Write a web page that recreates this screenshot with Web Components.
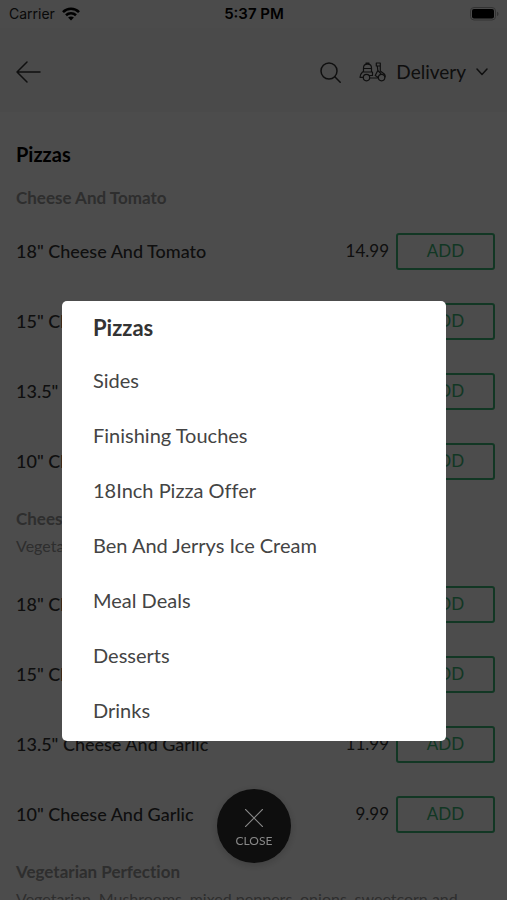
<!DOCTYPE html>
<html lang="en">
<head>
<meta charset="utf-8">
<meta name="viewport" content="width=device-width, initial-scale=1">
<title>Pizzas</title>
<style>
  body { margin: 0; background: #fff; font-family: Lato, "Open Sans", sans-serif; font-variant-ligatures: none; color: #333; }
</style>
</head>
<body>
<menu-screen></menu-screen>
<script>
const define = (name, html, setup) => customElements.define(name, class extends HTMLElement {
  constructor() {
    super();
    const t = document.createElement('template');
    t.innerHTML = html;
    this.attachShadow({ mode: 'open' }).append(t.content.cloneNode(true));
  }
  connectedCallback() { if (setup) setup(this, this.shadowRoot); }
});

define('status-bar', `
<style>
  :host { display: grid; grid-template-columns: 1fr auto 1fr; align-items: center; height: 28px; padding: 0 8px 0 9px; font: 14px/20px Inter, sans-serif; color: #000; background: #fafafa; }
  .left { display: flex; align-items: center; gap: 7px; color: #222; }
  .time { font-size: 15px; font-weight: 600; }
  .battery { justify-self: end; }
  svg { display: block; }
</style>
<span class="left">Carrier
  <svg width="18" height="14" viewBox="0 0 18 14" fill="none" stroke="#000" stroke-width="2.6"><path d="M1 5.1C5.4.6 12.6.6 17 5.1M4 8.2c2.800-2.700 7.200-2.700 10 0"/><path d="M9 13.600l-2.900-3c1.600-1.500 4.200-1.500 5.800 0z" fill="#000" stroke="none"/></svg>
</span>
<span class="time">5:37 PM</span>
<svg class="battery" width="29" height="14" viewBox="0 0 29 14"><rect x=".5" y=".5" width="25" height="12.500" rx="3.500" fill="none" stroke="#aaa"/><rect x="2" y="2" width="22" height="9.500" rx="2" fill="#000"/><path d="M27 4.700c2 .7 2 3.600 0 4.300z" fill="#aaa"/></svg>
`);

define('top-bar', `
<style>
  :host { display: flex; align-items: center; box-sizing: border-box; height: 84px; padding: 4px 19px 0 16px; color: #333; background: #f7f7f7; }
  button { all: unset; display: flex; align-items: center; cursor: pointer; }
  .back { margin-right: auto; }
  .search { margin-right: 18px; }
  .mode { gap: 10px; font-size: 19px; line-height: 24px; }
  svg { display: block; fill: none; stroke: #333; stroke-linecap: round; stroke-linejoin: round; }
</style>
<button class="back" aria-label="Back"><svg width="25" height="22" viewBox="0 0 25 22" stroke-width="1.500"><path d="M24 11H1M11 1L1 11l10 10"/></svg></button>
<button class="search" aria-label="Search"><svg width="21" height="21" viewBox="0 0 21 21" stroke-width="1.500"><circle cx="9" cy="9" r="8"/><path d="M14.800 14.800l5.400 5.400"/></svg></button>
<button class="mode">
  <svg width="27" height="20" viewBox="0 0 27 20" stroke-width="1.200"><path d="M4.500 10V6C4.500 3.600 6.200 2.200 8.500 2.200S12.500 3.600 12.500 6v4M7 2.300V1h3v1.300M4.500 6.500h8M3.500 10h10v3.500h-3M3.500 10C2 11.500 1 13 1 15.300h3.300M10.800 16h8.600M17.300 1h4v3h-4zM18.300 4l.5 4.500-2.600 5 3.200 2M21.300 4v5l4 3c.8.8 1 1.800.9 2.800M18.800 8.500l3 3"/><circle cx="7.500" cy="15.600" r="3.200"/><circle cx="22.600" cy="15.600" r="3.200"/></svg>
  <span>Delivery</span>
  <svg width="12" height="8" viewBox="0 0 12 8" stroke-width="1.500"><path d="M1 1l5 5.500L11 1"/></svg>
</button>
`);

define('menu-group', `
<style>
  :host { display: block; }
  header { padding: 12px 0 7px; color: #999; }
  h2 { margin: 0; font-size: 17px; line-height: 22px; font-weight: 700; }
  p { margin: 4px 0; font-size: 16px; line-height: 24px; white-space: nowrap; }
</style>
<header><h2></h2><p></p></header>
<slot></slot>
`, (el, root) => {
  root.querySelector('h2').textContent = el.getAttribute('name');
  const p = root.querySelector('p');
  if (el.hasAttribute('note')) p.textContent = el.getAttribute('note'); else p.remove();
});

define('menu-item', `
<style>
  :host { display: flex; align-items: center; height: 70px; font-size: 18px; line-height: 24px; color: #333; }
  .name { flex: 1; font-weight: 500; }
  .price { margin-right: 7px; font-size: 17px; }
  button { box-sizing: border-box; width: 99px; height: 37px; margin: 0; padding: 0; border: 2px solid #3cb878; border-radius: 3px; background: none; color: #3cb878; font: 17px/24px Lato, sans-serif; cursor: pointer; }
</style>
<span class="name"><slot></slot></span>
<span class="price"></span>
<button>ADD</button>
`, (el, root) => { root.querySelector('.price').textContent = el.getAttribute('price'); });

define('category-option', `
<style>
  :host { display: block; }
  button { all: unset; box-sizing: border-box; display: block; width: 100%; height: 55px; padding: 0 31px 7px; font-size: 20px; line-height: 48px; color: #444; cursor: pointer; }
  :host([current]) button { padding: 3px 31px 4px; font-size: 22px; font-weight: 700; color: #333; }
</style>
<button><slot></slot></button>
`);

define('close-button', `
<style>
  button { display: flex; flex-direction: column; align-items: center; justify-content: center; gap: 6px; box-sizing: border-box; width: 74px; height: 74px; margin: 0; padding: 5px 0 0; border: 0; border-radius: 50%; background: #0e0e0e; color: #888; font: 12px/16px Lato, sans-serif; box-shadow: 0 2px 10px rgba(0,0,0,.2); cursor: pointer; }
  svg { display: block; stroke: #888; stroke-width: 1.200; }
</style>
<button><svg width="18" height="18" viewBox="0 0 18 18"><path d="M0 0l18 18M18 0L0 18"/></svg><span>CLOSE</span></button>
`);

define('category-picker', `
<style>
  :host { position: fixed; inset: 0; display: flex; flex-direction: column; align-items: center; justify-content: flex-end; gap: 48px; padding: 0 61px 37px 62px; background: rgba(0,0,0,.7); }
  nav { align-self: stretch; border-radius: 5px; background: #fff; }
</style>
<nav aria-label="Menu categories"><slot></slot></nav>
<close-button></close-button>
`);

define('menu-screen', `
<style>
  :host { display: block; height: 100vh; overflow: hidden; }
  main { padding: 30px 12px 0 16px; }
  h1 { margin: 0 0 9px; font-size: 20px; line-height: 24px; font-weight: 700; color: #000; }
</style>
<status-bar></status-bar>
<top-bar></top-bar>
<main>
  <h1>Pizzas</h1>
  <menu-group name="Cheese And Tomato">
    <menu-item price="14.99">18" Cheese And Tomato</menu-item>
    <menu-item price="12.99">15" Cheese And Tomato</menu-item>
    <menu-item price="10.99">13.5" Cheese And Tomato</menu-item>
    <menu-item price="8.99">10" Cheese And Tomato</menu-item>
  </menu-group>
  <menu-group name="Cheese And Garlic" note="Vegetarian">
    <menu-item price="15.99">18" Cheese And Garlic</menu-item>
    <menu-item price="13.99">15" Cheese And Garlic</menu-item>
    <menu-item price="11.99">13.5" Cheese And Garlic</menu-item>
    <menu-item price="9.99">10" Cheese And Garlic</menu-item>
  </menu-group>
  <menu-group name="Vegetarian Perfection" note="Vegetarian. Mushrooms, mixed peppers, onions, sweetcorn and"></menu-group>
</main>
<category-picker>
  <category-option current>Pizzas</category-option>
  <category-option>Sides</category-option>
  <category-option>Finishing Touches</category-option>
  <category-option>18Inch Pizza Offer</category-option>
  <category-option>Ben And Jerrys Ice Cream</category-option>
  <category-option>Meal Deals</category-option>
  <category-option>Desserts</category-option>
  <category-option>Drinks</category-option>
</category-picker>
`);
</script>
</body>
</html>
